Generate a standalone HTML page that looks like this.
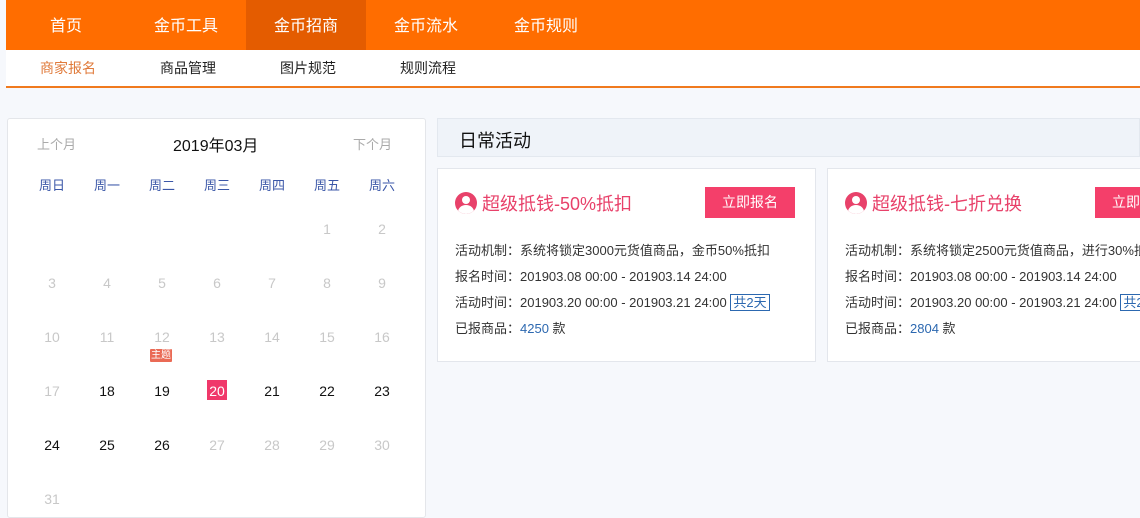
<!DOCTYPE html>
<html><head><meta charset="utf-8"><style>
*{margin:0;padding:0;box-sizing:border-box}
body{width:1140px;height:502px;overflow:hidden;background:#f6f8fc;font-family:"Liberation Sans","Noto Sans CJK SC",sans-serif;position:relative}
.a{position:absolute;white-space:nowrap}
.top{left:6px;top:0;width:1134px;height:50px;background:#ff6d00}
.tn{top:2px;height:50px;line-height:50px;color:#fff;font-size:16px;text-align:center;width:120px}
.sub{left:6px;top:50px;width:1134px;height:38px;background:#fff;border-bottom:2px solid #f07a1e}
.sn{top:49px;height:38px;line-height:38px;font-size:14px;color:#222}
.cal{left:7px;top:118px;width:419px;height:400px;background:#fff;border:1px solid #e4e6ea;border-radius:3px}
.c{width:40px;margin-left:-20px;text-align:center;font-size:14px}
.w{color:#3b57a8;font-size:13px}
.g{color:#c8c8c8}
.b{color:#111}
.card{top:168px;width:379px;height:194px;background:#fff;border:1px solid #e3e6ec}
.t{font-size:13px;color:#333}
.btn{width:90px;height:31px;background:#f43f6a;color:#fff;font-size:14px;line-height:31px;text-align:center}
.ttl{font-size:18px;color:#e8416a}
.ic{width:22px;height:22px;border-radius:50%;background:#e8416a;overflow:hidden}
</style></head><body>
<div class="a top"></div>
<div class="a" style="left:246px;top:0;width:120px;height:50px;background:#e45c00"></div>
<div class="a tn" style="left:6px">首页</div>
<div class="a tn" style="left:126px">金币工具</div>
<div class="a tn" style="left:246px">金币招商</div>
<div class="a tn" style="left:366px">金币流水</div>
<div class="a tn" style="left:486px">金币规则</div>
<div class="a sub"></div>
<div class="a sn" style="left:40px;color:#e07a3a">商家报名</div>
<div class="a sn" style="left:160px">商品管理</div>
<div class="a sn" style="left:280px">图片规范</div>
<div class="a sn" style="left:400px">规则流程</div>

<div class="a cal"></div>
<div class="a" style="left:37px;top:134px;font-size:13px;color:#aaa">上个月</div>
<div class="a" style="left:173px;top:132px;font-size:16px;color:#111">2019年03月</div>
<div class="a" style="left:353px;top:134px;font-size:13px;color:#aaa">下个月</div>
<div class="a c w" style="left:52px;top:175px">周日</div>
<div class="a c w" style="left:107px;top:175px">周一</div>
<div class="a c w" style="left:162px;top:175px">周二</div>
<div class="a c w" style="left:217px;top:175px">周三</div>
<div class="a c w" style="left:272px;top:175px">周四</div>
<div class="a c w" style="left:327px;top:175px">周五</div>
<div class="a c w" style="left:382px;top:175px">周六</div>

<div class="a c g" style="left:327px;top:221px">1</div><div class="a c g" style="left:382px;top:221px">2</div>
<div class="a c g" style="left:52px;top:275px">3</div><div class="a c g" style="left:107px;top:275px">4</div><div class="a c g" style="left:162px;top:275px">5</div><div class="a c g" style="left:217px;top:275px">6</div><div class="a c g" style="left:272px;top:275px">7</div><div class="a c g" style="left:327px;top:275px">8</div><div class="a c g" style="left:382px;top:275px">9</div>
<div class="a c g" style="left:52px;top:329px">10</div><div class="a c g" style="left:107px;top:329px">11</div><div class="a c g" style="left:162px;top:329px">12</div><div class="a c g" style="left:217px;top:329px">13</div><div class="a c g" style="left:272px;top:329px">14</div><div class="a c g" style="left:327px;top:329px">15</div><div class="a c g" style="left:382px;top:329px">16</div>
<div class="a" style="left:150px;top:349px;width:22px;height:13px;background:#ea6a55;color:#fff;font-size:10px;line-height:13px;text-align:center;border-radius:1px">主题</div>
<div class="a c g" style="left:52px;top:383px">17</div><div class="a c b" style="left:107px;top:383px">18</div><div class="a c b" style="left:162px;top:383px">19</div>
<div class="a" style="left:207px;top:380px;width:20px;height:20px;background:#f0386a"></div>
<div class="a c" style="left:217px;top:383px;color:#fff">20</div>
<div class="a c b" style="left:272px;top:383px">21</div><div class="a c b" style="left:327px;top:383px">22</div><div class="a c b" style="left:382px;top:383px">23</div>
<div class="a c b" style="left:52px;top:437px">24</div><div class="a c b" style="left:107px;top:437px">25</div><div class="a c b" style="left:162px;top:437px">26</div><div class="a c g" style="left:217px;top:437px">27</div><div class="a c g" style="left:272px;top:437px">28</div><div class="a c g" style="left:327px;top:437px">29</div><div class="a c g" style="left:382px;top:437px">30</div>
<div class="a c g" style="left:52px;top:491px">31</div>

<div class="a" style="left:437px;top:118px;width:703px;height:39px;background:#eff3f9;border:1px solid #e3e8ef"></div>
<div class="a" style="left:459px;top:127px;font-size:18px;color:#111">日常活动</div>

<div class="a card" style="left:437px"></div>
<div class="a ic" style="left:455px;top:192px"><div style="position:absolute;left:7px;top:4px;width:8px;height:8px;border-radius:50%;background:#fff"></div><div style="position:absolute;left:3px;top:13px;width:16px;height:14px;border-radius:50%;background:#fff"></div></div>
<div class="a ttl" style="left:482px;top:190px">超级抵钱-50%抵扣</div>
<div class="a btn" style="left:705px;top:187px">立即报名</div>
<div class="a t" style="left:455px;top:240px">活动机制：系统将锁定3000元货值商品，金币50%抵扣</div>
<div class="a t" style="left:455px;top:266px">报名时间：201903.08 00:00 - 201903.14 24:00</div>
<div class="a t" style="left:455px;top:292px">活动时间：201903.20 00:00 - 201903.21 24:00 <span style="border:1px solid #2c68b0;color:#2c68b0;padding:0 2px">共2天</span></div>
<div class="a t" style="left:455px;top:318px">已报商品：<span style="color:#2c68b0">4250</span> 款</div>

<div class="a card" style="left:827px;width:330px"></div>
<div class="a ic" style="left:845px;top:192px"><div style="position:absolute;left:7px;top:4px;width:8px;height:8px;border-radius:50%;background:#fff"></div><div style="position:absolute;left:3px;top:13px;width:16px;height:14px;border-radius:50%;background:#fff"></div></div>
<div class="a ttl" style="left:872px;top:190px">超级抵钱-七折兑换</div>
<div class="a btn" style="left:1095px;top:187px">立即报名</div>
<div class="a t" style="left:845px;top:240px">活动机制：系统将锁定2500元货值商品，进行30%抵扣</div>
<div class="a t" style="left:845px;top:266px">报名时间：201903.08 00:00 - 201903.14 24:00</div>
<div class="a t" style="left:845px;top:292px">活动时间：201903.20 00:00 - 201903.21 24:00 <span style="border:1px solid #2c68b0;color:#2c68b0;padding:0 2px">共2天</span></div>
<div class="a t" style="left:845px;top:318px">已报商品：<span style="color:#2c68b0">2804</span> 款</div>
</body></html>
